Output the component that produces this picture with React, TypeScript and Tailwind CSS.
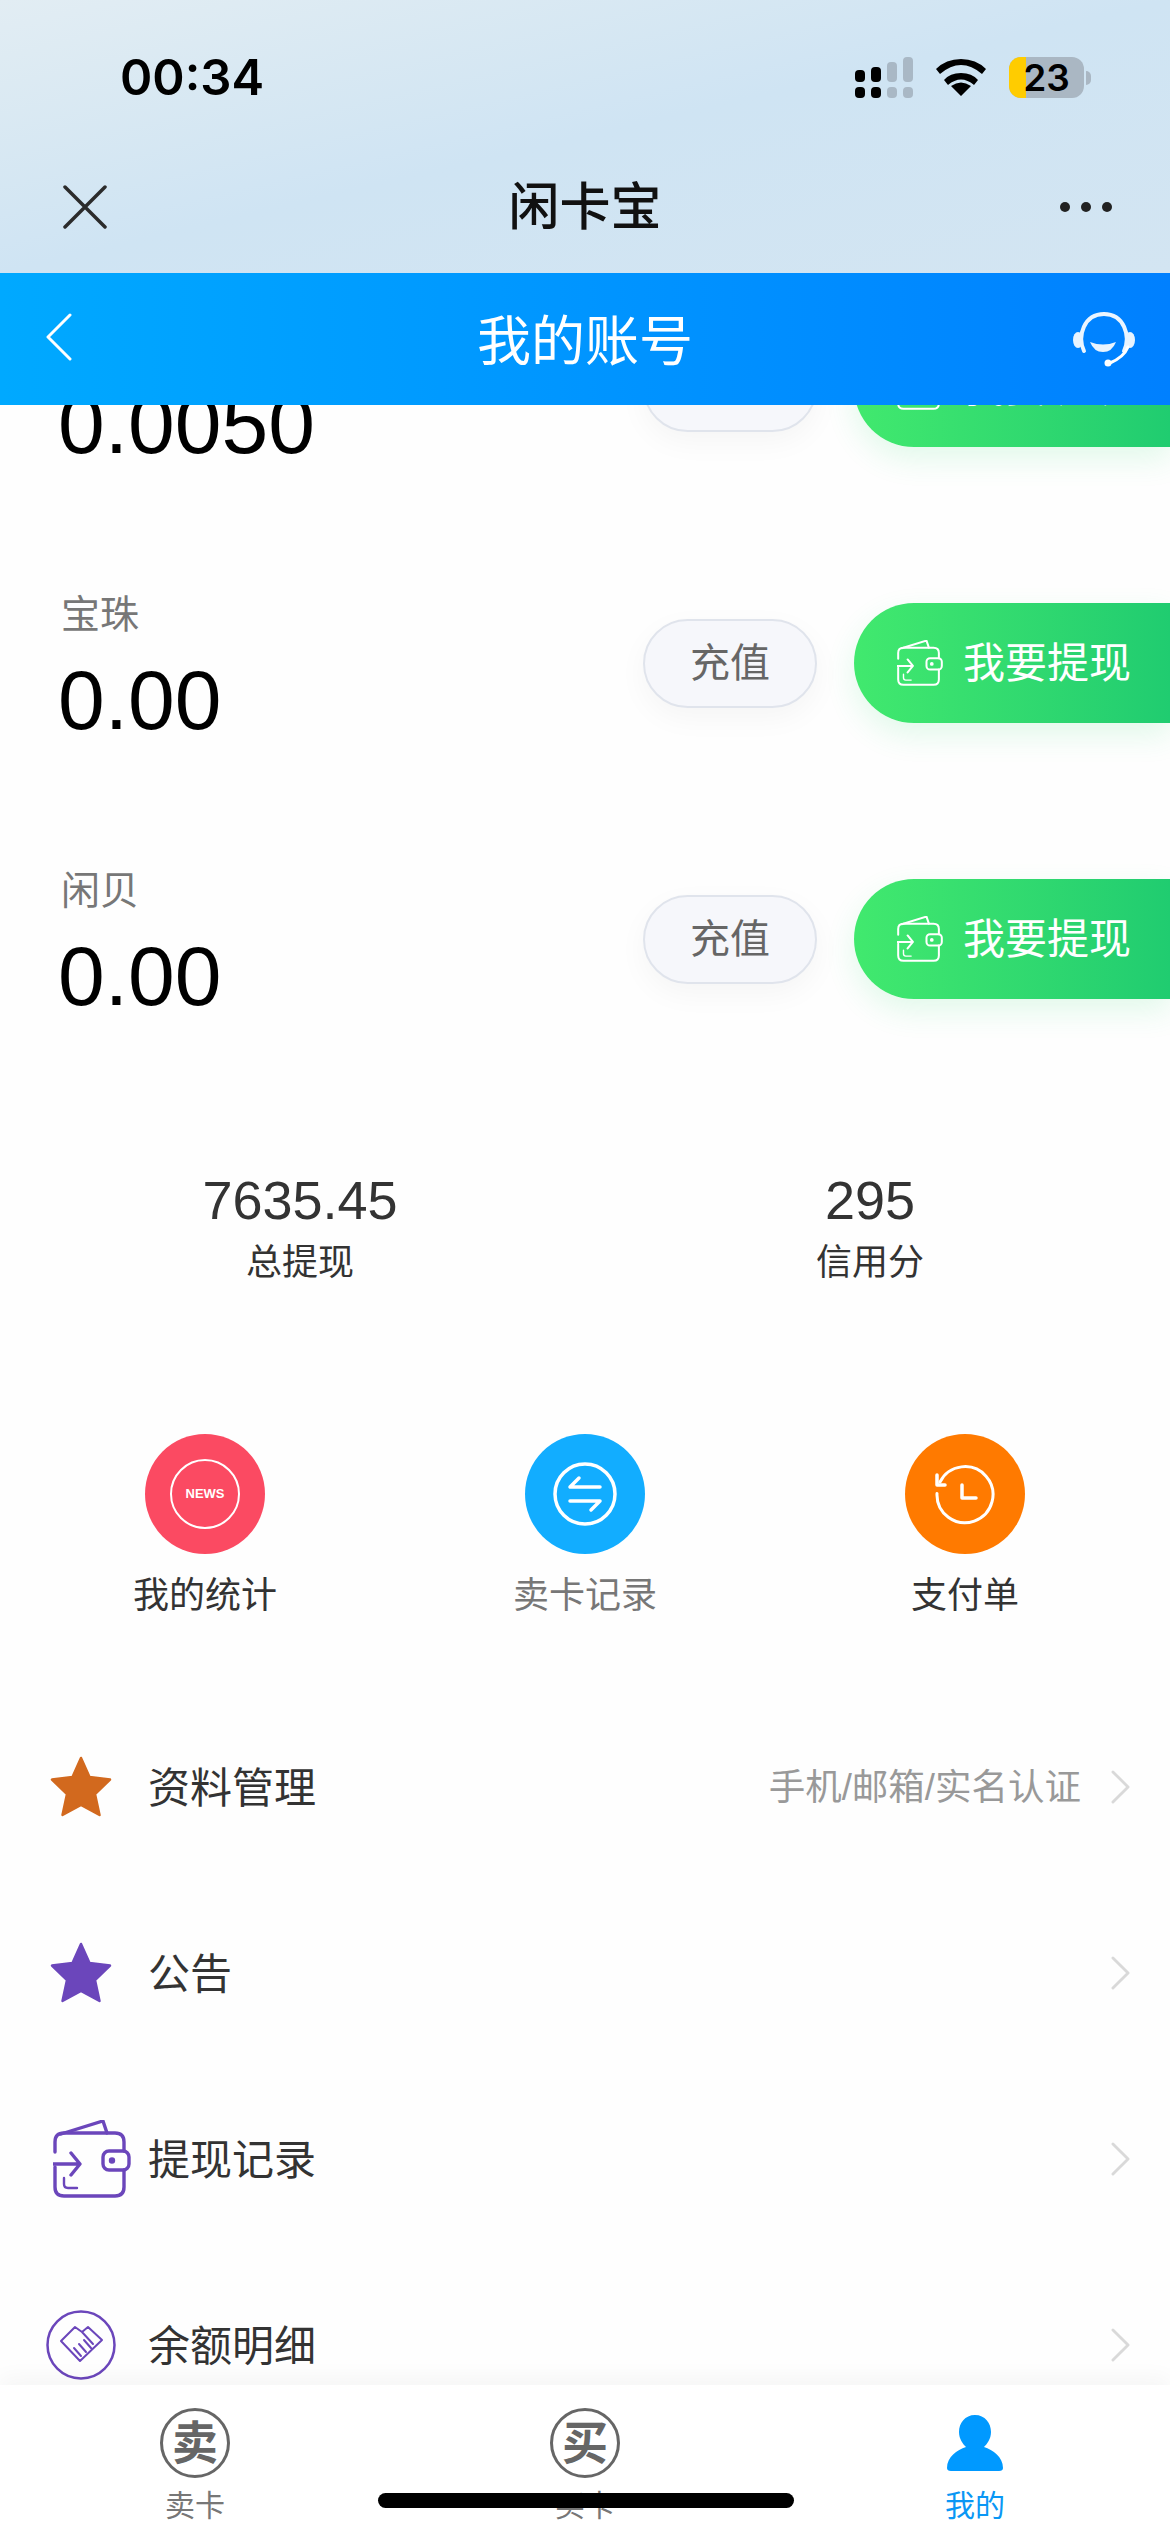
const font = "font-['Liberation_Sans','Noto_Sans_CJK_SC',sans-serif]";

function Wallet({ color, className }: { color: string; className: string }) {
  return (
    <svg viewBox="0 0 78 78" className={className} fill="none" stroke={color} strokeWidth="3.4" strokeLinecap="round" strokeLinejoin="round">
      <path d="M8 14 L50 1 L54 13" />
      <path d="M2 32 V22 Q2 13 11 13 H62 Q71 13 71 22 V31" />
      <path d="M71 50 V67 Q71 76 62 76 H11 Q2 76 2 67 V47" />
      <rect x="50" y="31" width="26" height="19" rx="6" />
      <circle cx="59" cy="40.500" r="1.500" fill={color} />
      <path d="M0 44 H26 M18 33 L27 44 L18 55" />
      <path d="M11 58 V64 Q11 68 15 68 H24" strokeWidth="2.400" />
    </svg>
  );
}

function Star({ color }: { color: string }) {
  return (
    <svg viewBox="0 0 62 62" className="h-[62px] w-[62px]">
      <path d="M31 2 L39.500 21 L60 23.500 L45 38 L49.500 59 L31 49 L12.500 59 L17 38 L2 23.500 L22.500 21 Z" fill={color} stroke={color} strokeWidth="2.500" strokeLinejoin="round" />
    </svg>
  );
}

function Chevron() {
  return (
    <svg viewBox="0 0 20 36" className="h-[34px] w-[19px]" fill="none" stroke="#d9d9d9" strokeWidth="3" strokeLinecap="round" strokeLinejoin="round">
      <path d="M2 2 L18 18 L2 34" />
    </svg>
  );
}

function BalanceRow({ label, value }: { label: string; value: string }) {
  return (
    <div className="flex h-[276px] items-center justify-between">
      <div className="flex flex-col pt-[12px] pl-[58px]">
        <span className="pl-[3px] text-[39px] leading-[50px] text-[#777777]">{label}</span>
        <span className="mt-[12px] text-[84px] leading-[96px] text-black">{value}</span>
      </div>
      <div className="flex items-center">
        <button className="mr-[37px] h-[89px] w-[174px] rounded-full border-2 border-[#e0e4ec] bg-[#f6f7fb] text-[40px] text-[#666666] shadow-[0_10px_30px_rgba(0,0,0,0.04)]">
          充值
        </button>
        <button className="flex h-[120px] w-[316px] items-center gap-[20px] rounded-l-[60px] bg-gradient-to-r from-[#41e96e] to-[#20cc70] pl-[43px] text-[42px] text-white shadow-[0_12px_30px_rgba(50,220,110,0.14)]">
          <Wallet color="#ffffff" className="h-[46px] w-[46px]" />
          <span>我要提现</span>
        </button>
      </div>
    </div>
  );
}

function Stat({ value, label }: { value: string; label: string }) {
  return (
    <div className="flex flex-1 flex-col items-center">
      <span className="text-[54px] leading-[66px] text-[#333333]">{value}</span>
      <span className="mt-[5px] text-[36px] leading-[50px] text-[#333333]">{label}</span>
    </div>
  );
}

function Action({ color, label, labelColor, children }: { color: string; label: string; labelColor: string; children: React.ReactNode }) {
  return (
    <div className="flex w-[380px] flex-col items-center">
      <div className={`flex h-[120px] w-[120px] items-center justify-center rounded-full ${color}`}>{children}</div>
      <span className={`mt-[17px] text-[36px] leading-[50px] ${labelColor}`}>{label}</span>
    </div>
  );
}

function ListRow({ icon, label, note }: { icon: React.ReactNode; label: string; note?: string }) {
  return (
    <div className="flex h-[186px] items-center rounded-[30px] pr-[40px] shadow-[0_0_8px_rgba(0,0,0,0.006)]">
      <div className="flex w-[148px] shrink-0 items-center pl-[50px]">{icon}</div>
      <span className="flex-1 pt-[2px] text-[42px] text-[#333333]">{label}</span>
      {note ? <span className="mr-[30px] pt-[2px] text-[36.500px] text-[#999999]">{note}</span> : null}
      <Chevron />
    </div>
  );
}

function Tab({ label, color, children }: { label: string; color: string; children: React.ReactNode }) {
  return (
    <div className="flex w-[390px] flex-col items-center pt-[23px]">
      <div className="flex h-[70px] items-center justify-center">{children}</div>
      <span className={`mt-[7px] text-[30px] leading-[42px] ${color}`}>{label}</span>
    </div>
  );
}

function CircleGlyph({ glyph }: { glyph: string }) {
  return (
    <div className="flex h-[70px] w-[70px] items-center justify-center rounded-full border-[3px] border-[#666666]">
      <span className="text-[46px] leading-none font-bold text-[#666666]">{glyph}</span>
    </div>
  );
}

export default function App() {
  return (
    <div className={`relative flex h-[2532px] w-[1170px] flex-col overflow-hidden bg-white ${font}`}>
      <div className="h-[273px] shrink-0 bg-gradient-to-br from-[#e2edf3] via-[#cfe4f3] to-[#d3e5f2]">
        <div className="flex h-[155px] items-center justify-between pr-[79px] pl-[120px]">
          <span className="font-['Inter',sans-serif] text-[49px] font-semibold text-black">00:34</span>
          <div className="flex items-center gap-[23px]">
            <svg viewBox="0 0 58 41" className="h-[41px] w-[58px]">
              <g fill="#000000">
                <rect x="0" y="13" width="10" height="12" rx="4" />
                <rect x="0" y="30" width="10" height="11" rx="4" />
                <rect x="16" y="10" width="10" height="15" rx="4" />
                <rect x="16" y="30" width="10" height="11" rx="4" />
              </g>
              <g fill="#a9b8c5">
                <rect x="32" y="5" width="10" height="20" rx="4" />
                <rect x="32" y="30" width="10" height="11" rx="4" />
                <rect x="48" y="0" width="10" height="25" rx="4" />
                <rect x="48" y="30" width="10" height="11" rx="4" />
              </g>
            </svg>
            <svg viewBox="0 0 50 37" className="h-[37px] w-[50px]">
              <path d="M25 37 L15 27 Q25 20 35 27 Z M25 14 Q36 14 42 21 L38 26 Q25 15 12 26 L8 21 Q14 14 25 14 Z M25 0 Q40 0 50 10 L46 15 Q25 -3 4 15 L0 10 Q10 0 25 0 Z" fill="#000000" />
            </svg>
            <div className="flex items-center">
              <div className="relative flex h-[41px] w-[75px] items-center justify-center rounded-[12px] bg-[#aab7c3]">
                <div className="absolute top-0 bottom-0 left-0 w-[17px] rounded-l-[12px] bg-[#ffcc00]" />
                <span className="relative font-['Inter',sans-serif] text-[37px] leading-[41px] font-semibold text-black">23</span>
              </div>
              <div className="ml-[2px] h-[14px] w-[5px] rounded-r-full bg-[#aab7c3]" />
            </div>
          </div>
        </div>
        <div className="relative flex h-[104px] items-center justify-center">
          <svg viewBox="0 0 44 44" className="absolute top-[30px] left-[63px] h-[44px] w-[44px]" fill="none" stroke="#2b2b2b" strokeWidth="3.500" strokeLinecap="round">
            <path d="M2 2 L42 42 M42 2 L2 42" />
          </svg>
          <span className="pt-[2px] text-[51px] leading-[70px] font-medium text-[#111111]">闲卡宝</span>
          <div className="absolute top-[47px] right-[58px] flex gap-[11px]">
            <div className="h-[10px] w-[10px] rounded-full bg-[#222222]" />
            <div className="h-[10px] w-[10px] rounded-full bg-[#222222]" />
            <div className="h-[10px] w-[10px] rounded-full bg-[#222222]" />
          </div>
        </div>
      </div>

      <div className="relative z-10 flex h-[132px] shrink-0 items-center justify-center bg-gradient-to-r from-[#00a9ff] to-[#0080ff]">
        <svg viewBox="0 0 26 48" className="absolute top-[40px] left-[46px] h-[48px] w-[26px]" fill="none" stroke="#ffffff" strokeWidth="3" strokeLinecap="round" strokeLinejoin="round">
          <path d="M24 2 L2 24 L24 46" />
        </svg>
        <span className="pt-[6px] text-[54px] leading-[70px] text-white">我的账号</span>
        <svg viewBox="0 0 64 58" className="absolute top-[38px] left-[1072px] h-[58px] w-[64px]" fill="none">
          <path d="M12 40 C5 25 12 3 32 3 C52 3 59 25 52 40" stroke="#ffffff" strokeWidth="4" strokeLinecap="round" strokeOpacity="0.92" />
          <ellipse cx="6" cy="29" rx="5" ry="8" fill="#e8f4ff" />
          <ellipse cx="58" cy="29" rx="5" ry="8" fill="#e8f4ff" />
          <path d="M18 31 Q31 36 44 31 Q40 41 31 41 Q22 41 18 31 Z" fill="#e8f4ff" />
          <path d="M56 36 Q52 46 38 52" stroke="#ffffff" strokeWidth="3" strokeLinecap="round" />
          <circle cx="36" cy="52" r="3.500" fill="#ffffff" />
        </svg>
      </div>

      <div className="flex-1 overflow-hidden bg-[#fefefe]">
        <div className="-mt-[156px]">
          <BalanceRow label="闲豆" value="0.0050" />
          <BalanceRow label="宝珠" value="0.00" />
          <BalanceRow label="闲贝" value="0.00" />

          <div className="flex h-[293px] items-center px-[15px] pt-[8px]">
            <Stat value="7635.45" label="总提现" />
            <Stat value="295" label="信用分" />
          </div>

          <div className="flex h-[324px] px-[15px] pt-[64px]">
            <Action color="bg-[#fb4a62]" label="我的统计" labelColor="text-[#333333]">
              <div className="flex h-[70px] w-[70px] items-center justify-center rounded-full border-2 border-white">
                <span className="text-[13px] font-bold text-white">NEWS</span>
              </div>
            </Action>
            <Action color="bg-[#12adff]" label="卖卡记录" labelColor="text-[#777777]">
              <svg viewBox="0 0 64 64" className="h-[64px] w-[64px]" fill="none" stroke="#ffffff" strokeWidth="3.500" strokeLinecap="round" strokeLinejoin="round">
                <circle cx="32" cy="32" r="30" />
                <path d="M17 25 H47 M17 25 L26 16 M47 39 H17 M47 39 L38 48" />
              </svg>
            </Action>
            <Action color="bg-[#ff7a00]" label="支付单" labelColor="text-[#333333]">
              <svg viewBox="0 0 62 62" className="h-[62px] w-[62px]" fill="none" stroke="#ffffff" strokeWidth="3" strokeLinecap="round" strokeLinejoin="round">
                <path d="M6 19 A28 28 0 1 1 3 30.500" />
                <path d="M3 12 L3 22 L11 22" strokeWidth="3.500" />
                <path d="M28 22 V35 H42" strokeWidth="3.500" />
              </svg>
            </Action>
          </div>

          <ListRow icon={<Star color="#d2691e" />} label="资料管理" note="手机/邮箱/实名认证" />
          <ListRow icon={<Star color="#6b46bb" />} label="公告" />
          <ListRow icon={<Wallet color="#6b46bb" className="ml-[3px] h-[78px] w-[78px]" />} label="提现记录" />
          <ListRow
            icon={
              <svg viewBox="0 0 70 70" className="-ml-[4px] h-[70px] w-[70px]" fill="none" stroke="#6b46bb" strokeLinecap="round" strokeLinejoin="round">
                <circle cx="35" cy="35" r="33.500" strokeWidth="2.500" />
                <path d="M15 31 L29 17 L36 22 L42 17 L56 30 L34 51 Z M36 22 L47 34 M28 38 L35 46 M33 34 L40 42 M38 30 L45 38" strokeWidth="2" />
              </svg>
            }
            label="余额明细"
          />
        </div>
      </div>

      <div className="relative z-10 flex h-[147px] shrink-0 justify-between bg-white shadow-[0_-8px_20px_rgba(0,0,0,0.035)]">
        <Tab label="卖卡" color="text-[#777777]">
          <CircleGlyph glyph="卖" />
        </Tab>
        <Tab label="买卡" color="text-[#777777]">
          <CircleGlyph glyph="买" />
        </Tab>
        <Tab label="我的" color="text-[#0a97f5]">
          <svg viewBox="0 0 56 56" className="h-[56px] w-[56px]">
            <path d="M28 0 C38 0 44 8 44 17 C44 24 40 29 37 32 C46 35 56 42 56 53 Q56 56 52 56 H4 Q0 56 0 53 C0 42 10 35 19 32 C16 29 12 24 12 17 C12 8 18 0 28 0 Z" fill="#0099ff" />
          </svg>
        </Tab>
      </div>

      <div className="absolute top-[2493px] left-[378px] z-20 h-[15px] w-[416px] rounded-full bg-black" />
    </div>
  );
}
